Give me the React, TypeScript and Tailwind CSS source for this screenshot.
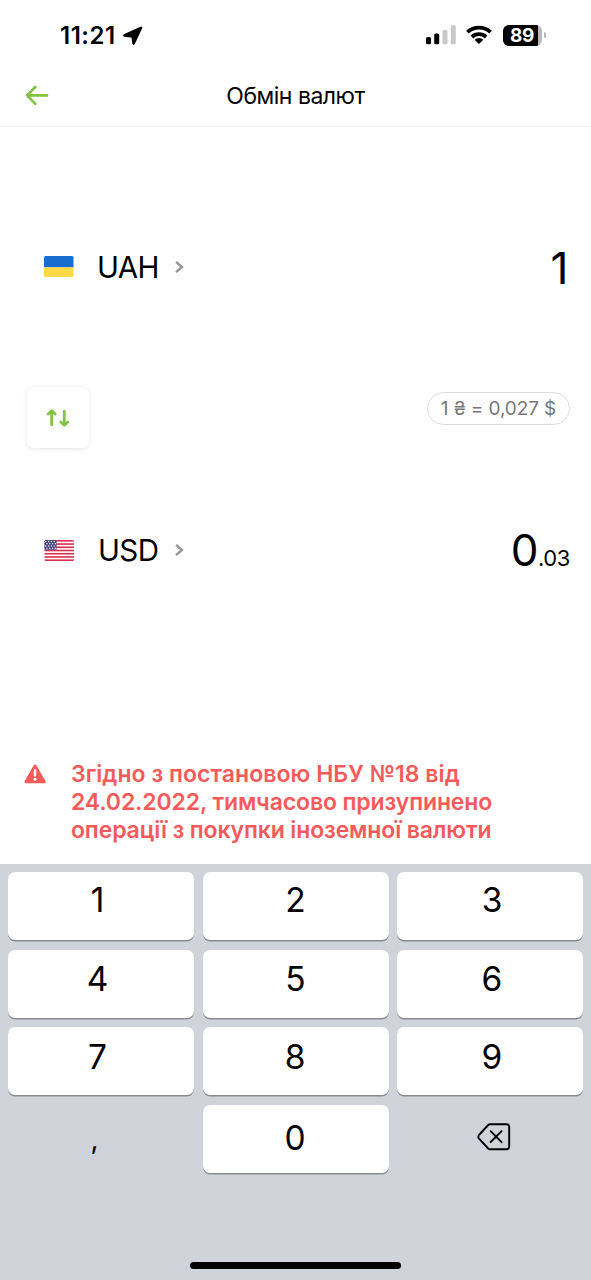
import React from 'react';

interface CurrencyRowProps {
    code: string;
    flag: React.ReactNode;
    whole: string;
    cents?: string;
}

interface KeyProps {
    label: string;
    className?: string;
}

const StatusBar = () => (
    <div className="flex h-[64px] items-start justify-between pt-[20px] pr-[45px] pl-[60px]">
        <div className="flex h-[31px] items-center gap-[6px]">
            <span className="w-[57px] text-[24px] leading-[31px] font-semibold tracking-[0.5px] whitespace-nowrap">
                11:21
            </span>
            <svg width="20" height="20" viewBox="0 0 20 20">
                <path
                    d="M18 1.8 10.6 17.6 9.6 10.6 1.4 9.4Z"
                    stroke="#000"
                    strokeWidth="2.5"
                    strokeLinejoin="round"
                />
            </svg>
        </div>

        <div className="flex h-[30px] items-center">
            {/* Signal */}
            <svg width="31" height="20" viewBox="0 0 31 20">
                <rect x="0" y="12" width="5" height="7.2" rx="1.5" />
                <rect x="8.2" y="8.5" width="5" height="10.7" rx="1.5" />
                <rect x="16.5" y="5" width="5" height="14.2" rx="1.5" fill="#c8c8c8" />
                <rect x="24.8" y="0.3" width="5" height="18.9" rx="1.5" fill="#c8c8c8" />
            </svg>
            {/* Wifi */}
            <svg width="28" height="20" viewBox="0 0 28 20" fill="none" stroke="#000" strokeWidth="3.8" className="ml-[8px]">
                <path d="M2.4 7.2a17 17 0 0 1 23.2 0" />
                <path d="M6.9 12a10.4 10.4 0 0 1 14.2 0" />
                <path d="M14 19 9.6 14.8a6.5 6.5 0 0 1 8.8 0Z" fill="#000" stroke="none" />
            </svg>
            {/* Batterie */}
            <div className="ml-[10px] flex items-center">
                <div className="flex h-[21px] w-[39px] overflow-hidden rounded-[6px] bg-[#b9b9b9]">
                    <div className="w-[35px] bg-black pl-[7px] text-[19px] leading-[21px] font-bold tracking-[-0.4px] text-white">
                        89
                    </div>
                </div>
                <div className="mr-[0.5px] ml-[1.5px] h-[6px] w-[2px] rounded-r-full bg-[#b9b9b9]" />
            </div>
        </div>
    </div>
);

const FlagUA = () => (
    <svg width="30" height="21" viewBox="0 0 30 21" className="-mt-px">
        <clipPath id="ua">
            <rect width="29.5" height="21" rx="1.5" />
        </clipPath>
        <g clipPath="url(#ua)">
            <rect width="30" height="11.5" fill="#1a6dd0" />
            <rect y="11.3" width="30" height="10" fill="#ffda48" />
        </g>
    </svg>
);

const FlagUS = () => (
    <svg width="30" height="21" viewBox="0 0 30 21">
        <clipPath id="us">
            <rect x="0.5" width="29.5" height="21" rx="1.5" />
        </clipPath>
        <g clipPath="url(#us)">
            <rect width="30" height="21" fill="#fff" />
            {[0, 1, 2, 3, 4, 5, 6].map((i) => (
                <rect key={i} y={i * 3.23} width="30" height="1.62" fill="#d9304f" />
            ))}
            <rect width="12.5" height="9.7" fill="#3c3f7c" />
            {[0, 1, 2, 3].map((row) =>
                [0, 1, 2, 3].map((col) => (
                    <circle
                        key={`${row}-${col}`}
                        cx={1.8 + col * 2.8 + (row % 2) * 1.2}
                        cy={1.4 + row * 2.3}
                        r="0.75"
                        fill="#fff"
                    />
                )),
            )}
        </g>
    </svg>
);

const CurrencyRow = ({ code, flag, whole, cents }: CurrencyRowProps) => (
    <div className="flex h-[100px] items-center justify-between pr-[21px] pl-[44px]">
        <div className="flex items-center">
            {flag}
            <span className={`w-[62px] text-[29.5px] leading-[41px] tracking-[-0.6px] ${cents ? 'ml-[24px]' : 'ml-[23px]'}`}>
                {code}
            </span>
            <svg
                width="10"
                height="14"
                viewBox="0 0 10 14"
                fill="none"
                stroke="#969696"
                strokeWidth="2.4"
                className={cents ? 'ml-[15px]' : 'ml-[16px]'}
            >
                <path d="M1 1.8 7 7 1 12.2" />
            </svg>
        </div>
        {cents ? (
            <div className="flex items-baseline">
                <span className="text-[44px] leading-[60px] tracking-[-0.5px]">{whole}</span>
                <span className="text-[22px] tracking-[-0.4px]">{cents}</span>
            </div>
        ) : (
            <span className="pt-px pr-[1.5px] text-[44px] leading-[62px]">{whole}</span>
        )}
    </div>
);

const Key = ({ label, className = '' }: KeyProps) => (
    <button
        className={`h-[68px] rounded-[7px] bg-white text-center text-[33.5px] shadow-[0_1.5px_0_#8a8b90] ${className}`}
    >
        <span className="block h-full">{label}</span>
    </button>
);

const Keyboard = () => (
    <div className="flex h-[416px] flex-col items-center bg-[#d0d3da] px-2 pt-2">
        <div className="grid w-full grid-cols-3 gap-x-[8.5px] gap-y-[9.5px]">
            <Key label="1" className="pr-[7px] leading-[57px]" />
            <Key label="2" className="leading-[57px]" />
            <Key label="3" className="pl-[4px] leading-[57px]" />
            <Key label="4" className="pr-[7px] leading-[59px]" />
            <Key label="5" className="leading-[59px]" />
            <Key label="6" className="pl-[4px] leading-[59px]" />
            <Key label="7" className="pr-[7px] leading-[60px]" />
            <Key label="8" className="pr-[1px] leading-[60px]" />
            <Key label="9" className="pl-[4px] leading-[60px]" />
            <button className="h-[68px] pr-[13px] text-center text-[28px] leading-[64px]">,</button>
            <Key label="0" className="pr-[1px] leading-[66px]" />
            <button className="flex h-[68px] justify-center pt-[18.5px] pl-[7px]">
                <svg width="34" height="28" viewBox="0 0 34 28" fill="none" stroke="#000" strokeWidth="1.9" strokeLinecap="round" strokeLinejoin="round">
                    <path d="M13 1.2H29.5Q32.2 1.2 32.2 3.9V23.6Q32.2 26.3 29.5 26.3H13Q12 26.3 11.2 25.5L2 15.6Q0.6 13.8 2 12L11.2 2Q12 1.2 13 1.2Z" />
                    <path d="M13.6 8.2 24.6 19.2M24.6 8.2 13.6 19.2" />
                </svg>
            </button>
        </div>
        <div className="mt-[89.4px] h-[7px] w-[211px] rounded-full bg-black" />
    </div>
);

const App = () => {
    return (
        <div className="h-[1280px] w-[591px] overflow-hidden bg-white font-['Inter','Liberation_Sans',sans-serif] text-black">
            <StatusBar />

            <header className="grid h-[63px] grid-cols-[1fr_auto_1fr] items-center border-b border-[#f2f2f2] px-[25px]">
                <button>
                    <svg width="24" height="20" viewBox="0 0 24 20" fill="none" stroke="#84c341" strokeWidth="2.6" strokeLinecap="round" strokeLinejoin="round">
                        <path d="M22 10.4H2.3M10.3 2 2 10.4l8.3 8.4" />
                    </svg>
                </button>
                <h1 className="pt-px text-[23px] leading-[30px] tracking-[-0.5px]">Обмін валют</h1>
            </header>

            <main className="h-[737px] pt-[90px]">
                <CurrencyRow code="UAH" flag={<FlagUA />} whole="1" />

                <div className="mt-[69px] mb-[52px] flex h-[62px] items-start justify-between pr-[21px] pl-[27px]">
                    {/* Bouton d'inversion des devises */}
                    <button className="mt-px flex h-[61px] w-[62px] items-center justify-center rounded-[7px] bg-white shadow-[0_1px_5px_rgba(0,0,0,0.11)]">
                        <svg width="24" height="18" viewBox="0 0 24 18" fill="none" stroke="#84c341" strokeWidth="2.8" strokeLinecap="round" strokeLinejoin="round">
                            <path d="M5.7 15.8V2.2M2.2 5 5.7 1.8 9.2 5M18.3 2.2V15.8M14.8 13 18.3 16.2 21.8 13" />
                        </svg>
                    </button>
                    <div className="mt-[6px] flex h-[33px] w-[143px] items-center justify-center rounded-full border border-[#dcdcdc] text-[19px] leading-[30px] tracking-[-0.1px] whitespace-nowrap text-[#777]">
                        1 ₴ = 0,027 $
                    </div>
                </div>

                <CurrencyRow code="USD" flag={<FlagUS />} whole="0" cents=".03" />

                <div className="mt-[159.5px] flex pl-[24px] text-[#f55b5b]">
                    <svg width="23" height="20" viewBox="0 0 23 20" className="mt-[4px] shrink-0">
                        <path d="M11 2 20.2 17.8H2Z" fill="#f55b5b" stroke="#f55b5b" strokeWidth="3" strokeLinejoin="round" />
                        <path d="M11 6.2V11.4" stroke="#fff" strokeWidth="2.4" strokeLinecap="round" />
                        <circle cx="11" cy="15.2" r="1.5" fill="#fff" />
                    </svg>
                    <p className="ml-[24px] text-[23px] leading-[28px] font-semibold whitespace-nowrap">
                        <span className="tracking-[0.05px]">Згідно з постановою НБУ №18 від</span>
                        <br />
                        <span className="tracking-[-0.12px]">24.02.2022, тимчасово призупинено</span>
                        <br />
                        <span className="tracking-[-0.13px]">операції з покупки іноземної валюти</span>
                    </p>
                </div>
            </main>

            <Keyboard />
        </div>
    );
};

export default App;
